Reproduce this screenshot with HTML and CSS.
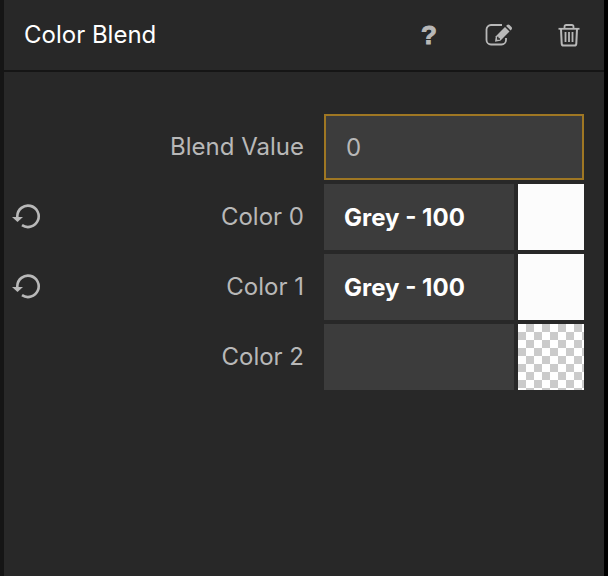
FILE: index.html
```html
<!DOCTYPE html>
<html lang="en">
<head>
<meta charset="utf-8">
<title>Color Blend</title>
<link rel="stylesheet" href="styles.css">
</head>
<body>
<main class="panel">
  <header class="header">
    <h1 class="title">Color Blend</h1>
    <div class="actions">
      <button class="icon-button help" type="button" aria-label="Help">?</button>
      <button class="icon-button" type="button" aria-label="Edit">
        <svg width="28" height="24" viewBox="0 0 28 24" fill="none" stroke="currentColor">
          <path d="M17 2H6a4.500 4.500 0 0 0-4.500 4.500v10.500a4.500 4.500 0 0 0 4.500 4.500h10.500a4.500 4.500 0 0 0 4.500-4.500V15" stroke-width="1.800"/>
          <path d="M10.800 13.200 20 4l4.500 4.500-9.200 9.200-5.300 1z" fill="currentColor" stroke="none"/>
          <path d="m21.100 2.900.9-.9q1.300-1 2.500 0l2 2q1 1.200 0 2.500l-.9.9z" fill="currentColor" stroke="none"/>
          <path d="M12.800 13.800v2.200h2.200" class="icon-cut" stroke-width="1.400"/>
        </svg>
      </button>
      <button class="icon-button" type="button" aria-label="Delete">
        <svg width="24" height="24" viewBox="0 0 24 24" fill="none" stroke="currentColor">
          <path d="M1.500 5.800h21" stroke-width="1.800"/>
          <path d="M7.500 5V3.700Q7.500 2 9.200 2h5.600q1.700 0 1.700 1.700V5" stroke-width="1.800"/>
          <path d="m4 6 .7 14.600q.1 1.900 2 1.900h10.600q1.900 0 2-1.900L20 6" stroke-width="2"/>
          <path d="M8.500 9v10M12 9v10M15.500 9v10" stroke-width="1.800"/>
        </svg>
      </button>
    </div>
  </header>
  <form class="fields">
    <div class="row">
      <label class="label" for="blend">Blend Value</label>
      <input class="value number" id="blend" type="text" value="0">
    </div>
    <div class="row">
      <button class="reset" type="button" aria-label="Reset Color 0">
        <svg width="32" height="28" viewBox="0 1 32 28"><path d="M7.300 16V14A10.700 10.700 0 1 1 12 23.200" fill="none" stroke="currentColor" stroke-width="2.600"/><path d="M2 15h11l-5.500 5z" fill="currentColor"/></svg>
      </button>
      <label class="label" for="color0">Color 0</label>
      <input class="value" id="color0" type="text" value="Grey - 100">
      <button class="swatch" type="button" aria-label="Pick Color 0"></button>
    </div>
    <div class="row">
      <button class="reset" type="button" aria-label="Reset Color 1">
        <svg width="32" height="28" viewBox="0 1 32 28"><path d="M7.300 16V14A10.700 10.700 0 1 1 12 23.200" fill="none" stroke="currentColor" stroke-width="2.600"/><path d="M2 15h11l-5.500 5z" fill="currentColor"/></svg>
      </button>
      <label class="label" for="color1">Color 1</label>
      <input class="value" id="color1" type="text" value="Grey - 100">
      <button class="swatch" type="button" aria-label="Pick Color 1"></button>
    </div>
    <div class="row">
      <label class="label" for="color2">Color 2</label>
      <input class="value" id="color2" type="text" value="">
      <button class="swatch transparent" type="button" aria-label="Pick Color 2"></button>
    </div>
  </form>
</main>
</body>
</html>
```

FILE: styles.css
```css
* {
  box-sizing: border-box;
}

body {
  margin: 0;
  background: #000;
  color: #b8b8b8;
  font: 24px/32px Inter, "Liberation Sans", sans-serif;
}

button,
input {
  margin: 0;
  padding: 0;
  border: 0;
  border-radius: 0;
  outline: 0;
  background: none;
  color: inherit;
  font: inherit;
}

svg {
  display: block;
}

.panel {
  min-height: 100vh;
  margin-right: 4px;
  border-left: 4px solid #151515;
  background: #282828;
}

.header {
  display: flex;
  align-items: center;
  justify-content: space-between;
  height: 72px;
  padding: 0 20px;
  border-bottom: 2px solid #151515;
}

.title {
  margin: 0;
  color: #fff;
  font-size: 24px;
  font-weight: 400;
}

.actions {
  display: flex;
  gap: 40px;
}

.icon-button {
  display: grid;
  place-items: center;
  width: 30px;
  height: 32px;
}

.help {
  font-family: "Liberation Sans", sans-serif;
  font-size: 26px;
  font-weight: 700;
  -webkit-text-stroke: 1px currentColor;
}

.icon-cut {
  stroke: #282828;
}

.fields {
  display: grid;
  gap: 4px;
  padding: 42px 20px 42px 6px;
}

.row {
  display: flex;
  align-items: center;
  gap: 4px;
  height: 66px;
}

.label {
  flex: 1;
  padding-right: 16px;
  text-align: right;
}

.value {
  width: 190px;
  height: 66px;
  padding: 0 20px;
  background: #3c3c3c;
  color: #fff;
  font-weight: 700;
}

.number {
  width: 260px;
  border: 2px solid #9f7723;
  color: #b8b8b8;
  font-weight: 400;
}

.swatch {
  width: 66px;
  height: 66px;
  background: #fcfcfc;
}

.transparent {
  background: conic-gradient(#cbcbcb 25%, #fff 0 50%, #cbcbcb 0 75%, #fff 0) 0 0 / 16px 16px;
}
```
